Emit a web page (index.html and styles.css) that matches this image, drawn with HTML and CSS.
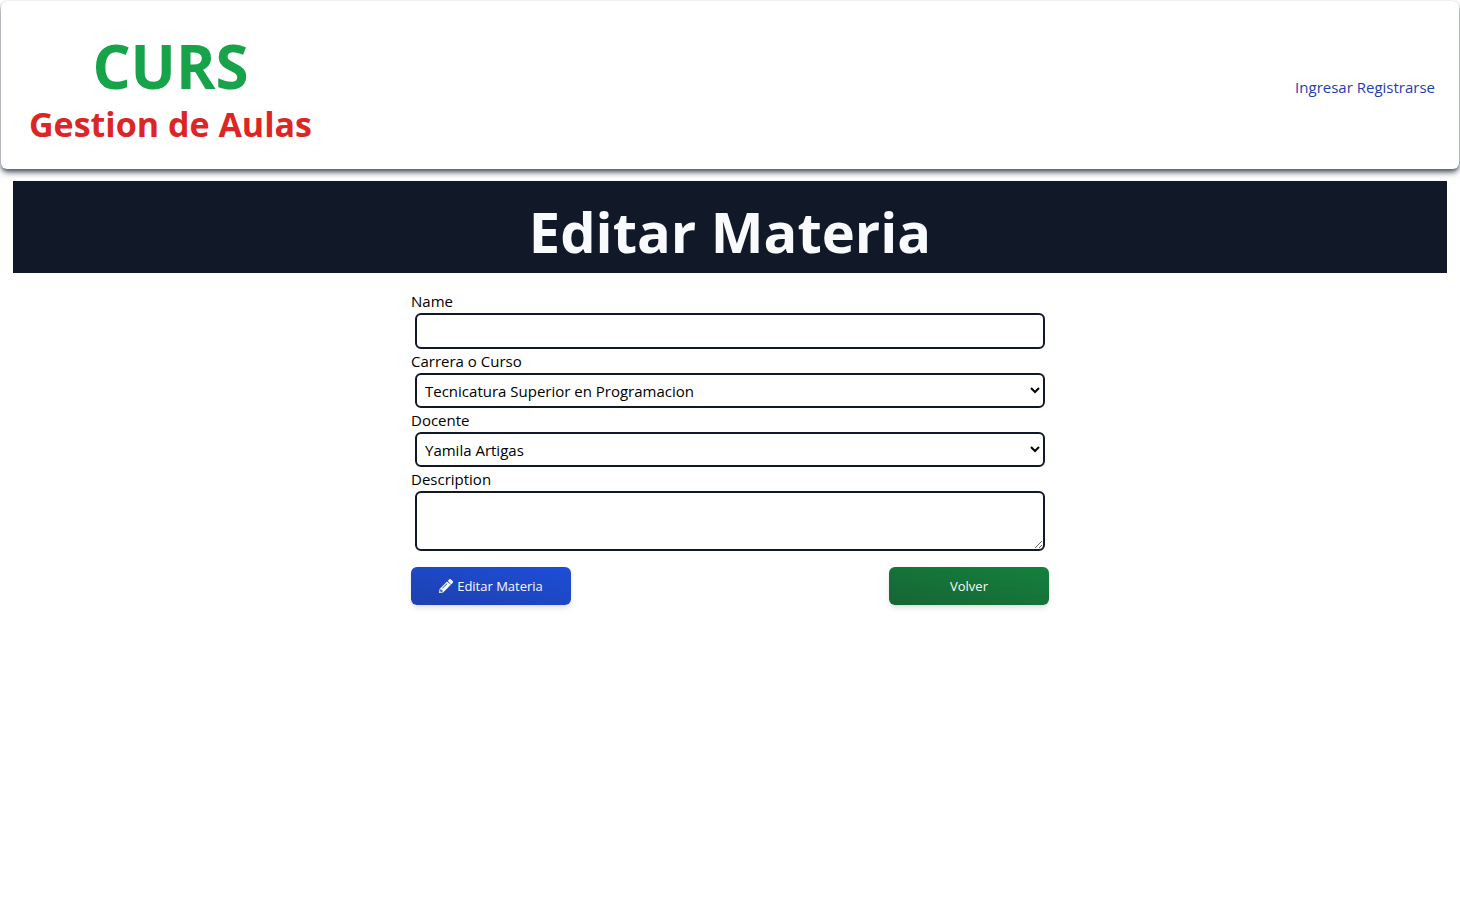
FILE: index.html
```html
<!DOCTYPE html>
<html lang="es">
<head>
<meta charset="utf-8">
<meta name="viewport" content="width=device-width, initial-scale=1">
<title>Editar Materia</title>
<link rel="stylesheet" href="styles.css">
</head>
<body>
<header class="site-header">
  <div class="brand">
    <h1 class="brand-name">CURS</h1>
    <h2 class="brand-tagline">Gestion de Aulas</h2>
  </div>
  <nav class="session-nav">
    <a href="#ingresar">Ingresar</a>
    <a href="#registrarse">Registrarse</a>
  </nav>
</header>
<main class="page">
  <h1 class="page-title">Editar Materia</h1>
  <form class="subject-form">
    <label for="name">Name</label>
    <input class="field" id="name" type="text">
    <label for="career">Carrera o Curso</label>
    <select class="field" id="career"><option>Tecnicatura Superior en Programacion</option></select>
    <label for="teacher">Docente</label>
    <select class="field" id="teacher"><option>Yamila Artigas</option></select>
    <label for="description">Description</label>
    <textarea class="field description" id="description"></textarea>
    <div class="actions">
      <button class="button button-save" type="submit">
        <svg class="pencil" viewBox="0 0 512 512" aria-hidden="true"><path fill="currentColor" d="M498 142l-46 46c-5 5-12 5-17 0L324 77c-5-5-5-12 0-17l46-46c19-19 49-19 68 0l60 60c19 19 19 49 0 68zM301 100L435 211 150 490 0 512 22 362 284 100c5-5 12-5 17 0zM124 340c6 5 14 5 20 0l154-154c5-6 5-14 0-20s-14-5-20 0L124 320c-5 6-5 14 0 20zM88 424v-48H52l-12 65 31 31 65-12v-36H88z" fill-rule="evenodd"/></svg>
        Editar Materia
      </button>
      <button class="button button-back" type="button">Volver</button>
    </div>
  </form>
</main>
</body>
</html>
```
FILE: styles.css
```css
*, *::before, *::after {
  box-sizing: border-box;
}

body {
  margin: 0;
  background: #fff;
  color: #000;
  font: 15px/24px "Segoe UI", "Open Sans", "Noto Sans", sans-serif;
}

h1, h2 {
  margin: 0;
}

.site-header {
  display: flex;
  align-items: center;
  justify-content: space-between;
  margin: 1px;
  padding: 28px 24px 24px 28px;
  border-radius: 6px;
  background: #fff;
  box-shadow: 0 4px 6px -1px #4b5563, 0 2px 4px -2px #4b5563, 0 0 1px 0 #d1d5db;
}

.brand {
  text-align: center;
}

.brand-name {
  color: #16a34a;
  font-size: 60px;
  line-height: 74px;
}

.brand-tagline {
  color: #dc2626;
  font-size: 34px;
  line-height: 42px;
}

.session-nav a {
  color: #1e40af;
  text-decoration: none;
}

.page {
  padding: 11px 13px;
}

.page-title {
  padding: 20px 16px 12px;
  background: #111827;
  color: #f9fafb;
  font-size: 56px;
  line-height: 60px;
  text-align: center;
}

.subject-form {
  display: flex;
  flex-direction: column;
  width: 100%;
  max-width: 638px;
  margin: 16px auto 0;
}

.field {
  height: 35px;
  margin: 0 4px;
  padding: 4px;
  border: 2px solid #111827;
  border-radius: 6px;
  background: #fff;
  color: #000;
  font: inherit;
}

input.field {
  height: 36px;
}

.description {
  height: 60px;
  resize: vertical;
}

.actions {
  display: flex;
  justify-content: space-between;
  margin-top: 16px;
}

.button {
  display: flex;
  align-items: center;
  justify-content: center;
  gap: 4px;
  width: 160px;
  height: 38px;
  border: 0;
  border-radius: 6px;
  color: #f9fafb;
  font: 13px/20px "Segoe UI", "Open Sans", "Noto Sans", sans-serif;
  box-shadow: 0 4px 6px -1px rgb(0 0 0 / 10%), 0 2px 4px -2px rgb(0 0 0 / 10%);
}

.button-save {
  background: linear-gradient(to top right, #1e40af, #1d4ed8);
}

.button-back {
  background: linear-gradient(to top right, #166534, #15803d);
}

.pencil {
  width: 14px;
  height: 14px;
}
```
